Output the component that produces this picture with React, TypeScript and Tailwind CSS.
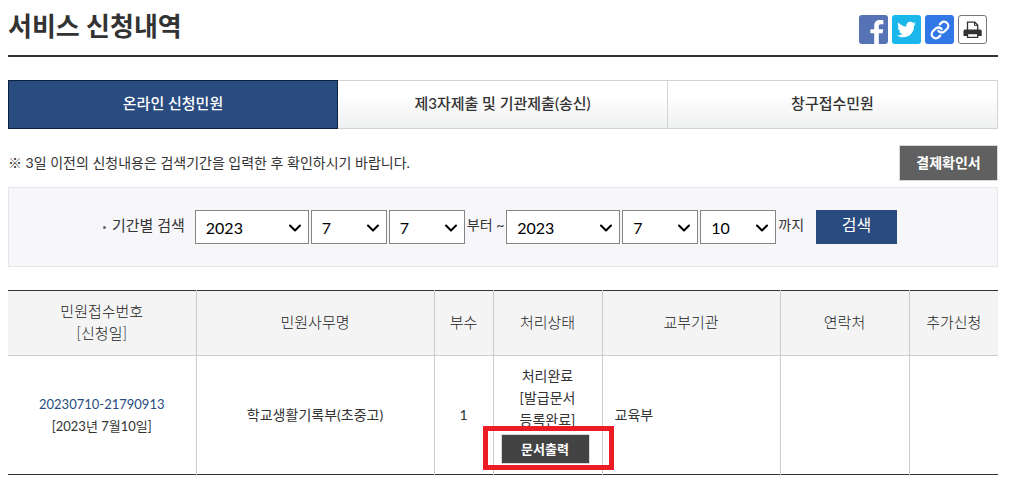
import { useState } from "react";
import { ChevronDown, Link } from "lucide-react";
import { FaTwitter } from "react-icons/fa";

type Request = {
  receiptNo: string;
  date: string;
  name: string;
  copies: number;
  status: string[];
  agency: string;
  contact: string;
};

const tabs = ["온라인 신청민원", "제3자제출 및 기관제출(송신)", "창구접수민원"];

const requests: Request[] = [
  {
    receiptNo: "20230710-21790913",
    date: "[2023년 7월10일]",
    name: "학교생활기록부(초중고)",
    copies: 1,
    status: ["처리완료", "[발급문서", "등록완료]"],
    agency: "교육부",
    contact: "",
  },
];

const years = [2021, 2022, 2023];
const months = Array.from({ length: 12 }, (_, i) => i + 1);
const days = Array.from({ length: 31 }, (_, i) => i + 1);

function DateSelect({
  label,
  options,
  initial,
  wide,
}: {
  label: string;
  options: number[];
  initial: number;
  wide?: boolean;
}) {
  return (
    <div className={`relative ${wide ? "w-[114px]" : "w-[76px]"}`}>
      <select
        aria-label={label}
        defaultValue={initial}
        className="h-[34px] w-full appearance-none border border-[#858585] bg-white pt-0.5 pl-2.5 text-base text-black"
      >
        {options.map((o) => (
          <option key={o} value={o}>
            {o}
          </option>
        ))}
      </select>
      <ChevronDown
        size={20}
        strokeWidth={2.5}
        className="pointer-events-none absolute top-2 right-1 text-black"
      />
    </div>
  );
}

function ShareButtons() {
  return (
    <div className="flex gap-1 pr-[11px]">
      <button aria-label="페이스북" className="size-[29px] overflow-hidden rounded-[3px] bg-[#5673b5]">
        <svg viewBox="0 0 29 29" className="size-full" fill="#fff">
          <path d="M15.2 29V18.3h-3.8v-4.1h3.8v-3.3c0-3.900 2.300-5.900 5.800-5.900 1.500 0 2.900.1 3.400.2v4h-2.300c-1.900 0-2.300.9-2.300 2.300v2.700h4.400l-.6 4.100h-3.800V29z" />
        </svg>
      </button>
      <button aria-label="트위터" className="flex size-[29px] items-center justify-center rounded-[3px] bg-[#1ab7ea] text-white">
        <FaTwitter size={19} />
      </button>
      <button aria-label="링크 복사" className="flex size-[29px] items-center justify-center rounded-[3px] bg-[#3178e6] text-white">
        <Link size={20} strokeWidth={2.75} />
      </button>
      <button aria-label="인쇄" className="size-[29px] rounded-[3px] border border-[#777] bg-white">
        <svg viewBox="0 0 27 27" className="size-full">
          <path d="M8.5 14V6.2h7.3l2.9 2.9V14" fill="none" stroke="#333" strokeWidth="1.3" />
          <path d="M15.5 6.2v3.2h3.2" fill="none" stroke="#333" />
          <path d="M6 13.5h15.2a1.5 1.5 0 0 1 1.5 1.5v5H4.500v-5A1.5 1.5 0 0 1 6 13.5z" fill="#333" />
          <path d="M8.5 17.7h10.2v3.6H8.5z" fill="#fff" stroke="#333" strokeWidth="1.3" />
        </svg>
      </button>
    </div>
  );
}

export default function App() {
  const [tab, setTab] = useState(0);

  return (
    <main className="bg-white pr-[13px] pb-2 pl-2 font-['Lato','Noto_Sans_CJK_KR',sans-serif] text-sm text-[#333]">
      <header className="flex h-[57px] items-start justify-between border-b-2 border-[#333]">
        <h1 className="pt-2 text-[26px] leading-9 font-bold">서비스 신청내역</h1>
        <div className="pt-[15px]">
          <ShareButtons />
        </div>
      </header>

      <nav className="mt-[23px] grid grid-cols-3">
        {tabs.map((t, i) => (
          <button
            key={t}
            onClick={() => setTab(i)}
            className={`h-[49px] border pb-0.5 text-[15px] font-medium ${
              tab === i
                ? "border-[#0c2340] bg-[#294b7f] text-white"
                : "border-l-0 border-[#d3d3d3] bg-linear-to-b from-white from-30% to-[#eff0f0]"
            }`}
          >
            {t}
          </button>
        ))}
      </nav>

      <div className="mt-4 flex items-center justify-between">
        <p>※ 3일 이전의 신청내용은 검색기간을 입력한 후 확인하시기 바랍니다.</p>
        <button className="h-9 w-[99px] border border-[#d9d9d9] bg-[#606060] font-bold text-white">결제확인서</button>
      </div>

      <form
        onSubmit={(e) => e.preventDefault()}
        className="mt-1.5 flex h-20 items-center justify-center border border-[#e5e5ec] bg-[#f7f7fa] pr-1.5"
      >
        <span className="mr-1.5 size-[3px] rounded-full bg-[#666]" />
        <span className="mr-2.5 pb-0.5 text-[15px]">기간별 검색</span>
        <div className="flex items-center gap-0.5">
          <DateSelect label="시작 연도" options={years} initial={2023} wide />
          <DateSelect label="시작 월" options={months} initial={7} />
          <DateSelect label="시작 일" options={days} initial={7} />
          <span className="pb-1">부터 ~</span>
          <DateSelect label="종료 연도" options={years} initial={2023} wide />
          <DateSelect label="종료 월" options={months} initial={7} />
          <DateSelect label="종료 일" options={days} initial={10} />
          <span className="pb-1">까지</span>
        </div>
        <button type="submit" className="ml-3 h-[34px] w-[81px] bg-[#294b7f] pb-1 text-base text-white">
          검색
        </button>
      </form>

      <table className="mt-[23px] w-full table-fixed border-y border-[#333] text-center leading-[22px]">
        <colgroup>
          <col className="w-[188px]" />
          <col />
          <col className="w-[59px]" />
          <col className="w-[109px]" />
          <col className="w-[178px]" />
          <col className="w-[129px]" />
          <col className="w-[89px]" />
        </colgroup>
        <thead>
          <tr className="h-[65px] divide-x divide-[#ccc] border-b border-[#ccc] bg-[#f4f4f4] text-[15px] text-[#222]">
            <th className="pb-0.5 font-light">
              민원접수번호
              <br />
              [신청일]
            </th>
            <th className="pb-0.5 font-light">민원사무명</th>
            <th className="pb-0.5 font-light">부수</th>
            <th className="pb-0.5 font-light">처리상태</th>
            <th className="pb-0.5 font-light">교부기관</th>
            <th className="pb-0.5 font-light">연락처</th>
            <th className="pb-0.5 font-light">추가신청</th>
          </tr>
        </thead>
        <tbody>
          {requests.map((r) => (
            <tr key={r.receiptNo} className="divide-x divide-[#ccc]">
              <td className="text-[13px]">
                <a href="#" className="text-[#294b7f]">
                  {r.receiptNo}
                </a>
                <br />
                {r.date}
              </td>
              <td>{r.name}</td>
              <td>{r.copies}</td>
              <td className="pt-[9px] pb-2.5">
                {r.status.map((s) => (
                  <div key={s}>{s}</div>
                ))}
                <div className="relative mx-[7px] mt-[3px] w-[89px]">
                  <button className="block h-[30px] w-full border border-[#d9d9d9] bg-[#434343] text-[13px] font-bold text-white">
                    문서출력
                  </button>
                  {/* highlight around the print button */}
                  <div className="pointer-events-none absolute -top-2 -right-6 -bottom-1.5 -left-[18px] border-[5px] border-[#ed1c24]" />
                </div>
              </td>
              <td className="pl-3 text-left">{r.agency}</td>
              <td>{r.contact}</td>
              <td></td>
            </tr>
          ))}
        </tbody>
      </table>
    </main>
  );
}
